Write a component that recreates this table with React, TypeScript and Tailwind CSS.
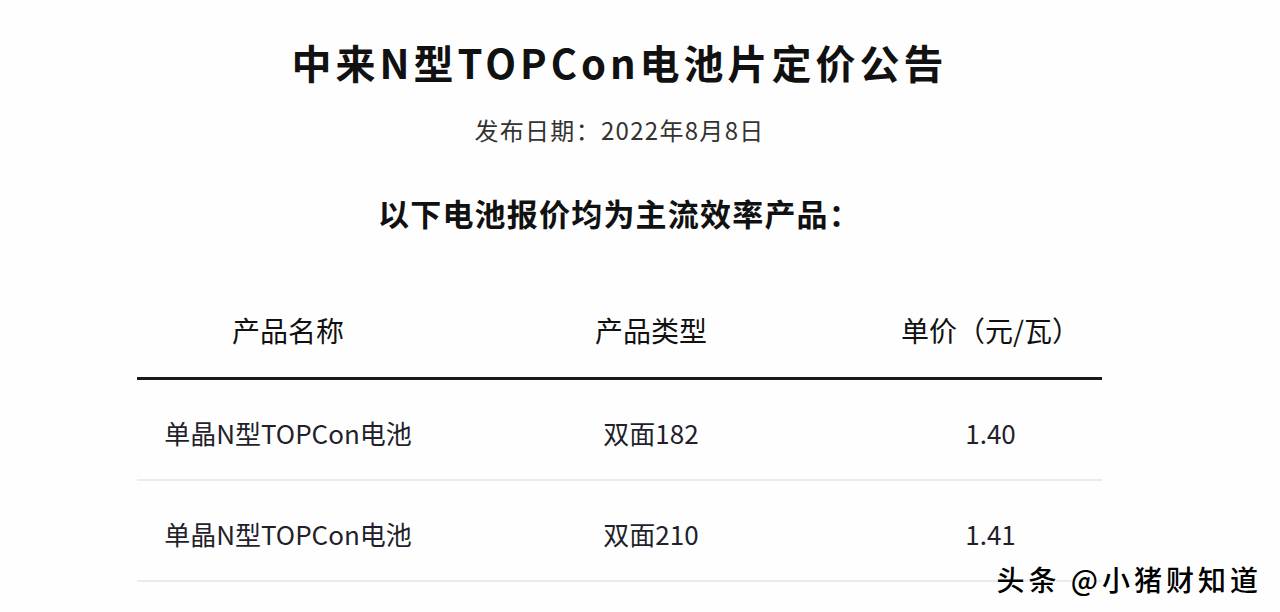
import React from 'react';

const rows = [
  { name: '单晶N型TOPCon电池', type: '双面182', price: '1.40' },
  { name: '单晶N型TOPCon电池', type: '双面210', price: '1.41' },
];

const App: React.FC = () => {
  return (
    <div
      className="relative h-[612px] w-[1280px] overflow-hidden bg-[#fefefe] text-[#151515]"
      style={{ fontFamily: '"Noto Sans CJK SC", "Noto Sans", sans-serif' }}
    >
      <div className="w-[1239px]">
        {/* Title */}
        <h1 className="mt-[42px] text-center text-[40px] font-bold leading-none tracking-[4px] text-[#111]">
          中来N型TOPCon电池片定价公告
        </h1>
        <p className="mt-[36px] text-center text-[24px] leading-none tracking-[1.3px] text-[#333]">
          发布日期：2022年8月8日
        </p>
        <h2 className="mt-[55px] text-center text-[31px] font-bold leading-none tracking-[1.2px] text-[#111]">
          以下电池报价均为主流效率产品：
        </h2>

        {/* Table */}
        <div className="mx-auto mt-[54px] w-[965px]">
          <div className="grid h-[98px] grid-cols-[302px_424px_239px] items-center border-b-[3px] border-[#1a1a1a] text-[28px] leading-none text-[#111]">
            <div className="text-center">产品名称</div>
            <div className="text-center">产品类型</div>
            <div className="pl-4 text-center">单价（元/瓦）</div>
          </div>
          {rows.map((row, i) => (
            <div
              key={i}
              className="grid h-[101px] grid-cols-[302px_424px_239px] items-center border-b-2 border-[#e8ecf1] pt-[6px] text-[26px] leading-none text-[#231f2b]"
            >
              <div className="text-center">{row.name}</div>
              <div className="text-center">{row.type}</div>
              <div className="pl-4 text-center">{row.price}</div>
            </div>
          ))}
        </div>
      </div>

      {/* Watermark */}
      <div className="absolute bottom-[19px] right-[18px] text-[28px] font-medium leading-none tracking-[4px] text-black [text-shadow:0_0_2px_#fff,1px_1px_0_#fff,-1px_-1px_0_#fff]">
        头条 @小猪财知道
      </div>
    </div>
  );
};

export default App;
